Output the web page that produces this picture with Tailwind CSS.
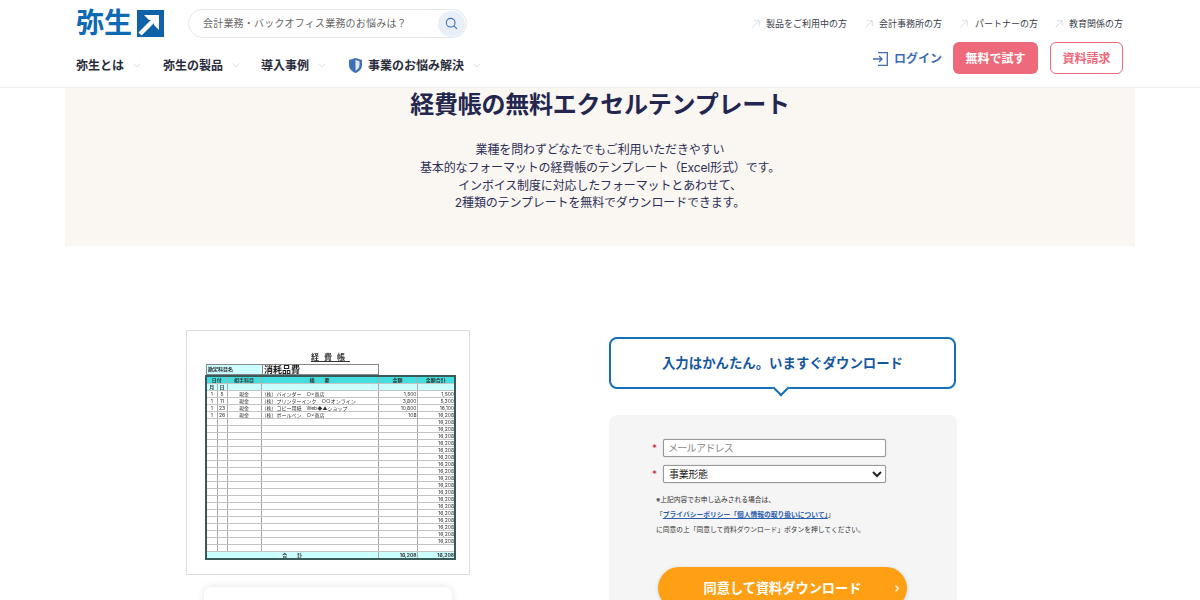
<!DOCTYPE html>
<html lang="ja">
  <head>
    <meta charset="UTF-8" />
    <title>経費帳の無料エクセルテンプレート</title>
    <script src="https://cdn.jsdelivr.net/npm/@tailwindcss/browser@4"></script>
  </head>
  <body class="h-[600px] overflow-hidden bg-white font-['Inter','Noto_Sans_CJK_JP',sans-serif] text-[#23264f]">
    <!-- header -->
    <header class="flex h-[88px] justify-between border-b border-[#ececec] pl-[76px] pr-[77px]">
      <div class="flex flex-col">
        <div class="flex items-center pt-[9px]">
          <a class="flex h-[29px] w-[88px] items-center justify-between">
            <span class="text-[28px] leading-[29px] font-bold text-[#0f6ab4]">弥生</span>
            <svg class="h-[27px] w-[27px]" viewBox="0 0 27 27">
              <rect width="27" height="27" fill="#0f62a8" />
              <path d="M3 24 L18 9" stroke="#fff" stroke-width="4.500" />
              <path d="M7 5 H22 V20 L17 15 V10 H12 Z" fill="#fff" />
            </svg>
          </a>
          <div class="ml-[24px] flex h-[29px] w-[279px] items-center justify-between rounded-full border border-[#e4e6ea] pl-[14px] pr-[1px]">
            <span class="text-[10px] tracking-[0.2px] text-[#666]">会計業務・バックオフィス業務のお悩みは？</span>
            <span class="flex h-[26px] w-[27px] items-center justify-center rounded-full bg-[#e9eff9]">
              <svg class="h-[13px] w-[13px]" viewBox="0 0 24 24" fill="none" stroke="#3f70b5" stroke-width="2">
                <circle cx="10.5" cy="10.5" r="8" />
                <path d="M16.5 16.5 L22 22" />
              </svg>
            </span>
          </div>
        </div>
        <nav class="mt-[18px] flex items-center text-[12px] leading-[19px] font-bold text-[#2a2c3c]">
          <span>弥生とは</span>
          <svg class="ml-[9px] h-[5px] w-[8px]" viewBox="0 0 8 5" fill="none" stroke="#dfe1e5"><path d="M.5.5 4 4 7.500.5" /></svg>
          <span class="ml-[22px]">弥生の製品</span>
          <svg class="ml-[9px] h-[5px] w-[8px]" viewBox="0 0 8 5" fill="none" stroke="#dfe1e5"><path d="M.5.5 4 4 7.500.5" /></svg>
          <span class="ml-[21px]">導入事例</span>
          <svg class="ml-[9px] h-[5px] w-[8px]" viewBox="0 0 8 5" fill="none" stroke="#dfe1e5"><path d="M.5.5 4 4 7.500.5" /></svg>
          <svg class="ml-[23px] h-[15px] w-[13px]" viewBox="0 0 13 15">
            <path d="M6.500 0 L13 2 V7 C13 11 10 13.500 6.500 15 C3 13.500 0 11 0 7 V2 Z" fill="#3f6fb5" />
            <path d="M6.500 2 L10.500 3.200 V7 C10.500 9.800 8.700 11.500 6.500 12.700 Z" fill="#dfe8f5" />
          </svg>
          <span class="ml-[6px]">事業のお悩み解決</span>
          <svg class="ml-[9px] h-[5px] w-[8px]" viewBox="0 0 8 5" fill="none" stroke="#dfe1e5"><path d="M.5.5 4 4 7.500.5" /></svg>
        </nav>
      </div>

      <div class="flex flex-col items-end">
        <ul class="mt-[17px] flex text-[9px] leading-[14px] text-[#3a3c4a]">
          <li class="flex items-center">
            <svg class="mr-[6px] h-[8px] w-[8px]" viewBox="0 0 8 8" fill="none" stroke="#dcdee2"><path d="M.5 7.500 7 1M2 .7H7.300V6" /></svg>製品をご利用中の方
          </li>
          <li class="ml-[18px] flex items-center">
            <svg class="mr-[6px] h-[8px] w-[8px]" viewBox="0 0 8 8" fill="none" stroke="#dcdee2"><path d="M.5 7.500 7 1M2 .7H7.300V6" /></svg>会計事務所の方
          </li>
          <li class="ml-[18px] flex items-center">
            <svg class="mr-[7px] h-[8px] w-[8px]" viewBox="0 0 8 8" fill="none" stroke="#dcdee2"><path d="M.5 7.500 7 1M2 .7H7.300V6" /></svg>パートナーの方
          </li>
          <li class="ml-[17px] flex items-center">
            <svg class="mr-[6px] h-[8px] w-[8px]" viewBox="0 0 8 8" fill="none" stroke="#dcdee2"><path d="M.5 7.500 7 1M2 .7H7.300V6" /></svg>教育関係の方
          </li>
        </ul>
        <div class="mt-[11px] flex items-center">
          <a class="flex items-center pt-[1px] text-[12px] font-bold text-[#3d6db3]">
            <svg class="mr-[6px] h-[14px] w-[15px]" viewBox="0 0 15 14" fill="none" stroke="#3d6db3" stroke-width="1.300">
              <path d="M0 7H9M6 4l3 3-3 3" />
              <path d="M5 .7H14.300V13.300H5" />
            </svg>ログイン
          </a>
          <a class="ml-[11px] flex h-[32px] w-[85px] items-center justify-center rounded-md bg-[#ee6a7b] pt-[1px] text-[12px] font-bold text-white">無料で試す</a>
          <a class="ml-[12px] flex h-[32px] w-[73px] items-center justify-center rounded-md border border-[#ee6a7b] pt-[1px] text-[12px] font-bold text-[#ee6a7b]">資料請求</a>
        </div>
      </div>
    </header>

    <!-- intro -->
    <section class="mx-[65px] h-[158px] bg-[#faf6f2] text-center">
      <h1 class="pt-[1px] text-[24px] leading-[32px] font-bold tracking-[-0.25px] text-[#23264f]">経費帳の無料エクセルテンプレート</h1>
      <p class="mt-[20px] text-[12px] leading-[17.75px] tracking-[-0.14px] text-[#2c2f55]">
        業種を問わずどなたでもご利用いただきやすい<br />
        基本的なフォーマットの経費帳のテンプレート（Excel形式）です。<br />
        インボイス制度に対応したフォーマットとあわせて、<br />
        2種類のテンプレートを無料でダウンロードできます。
      </p>
    </section>

    <main class="flex items-start pl-[186px]">
      <!-- template preview -->
      <div class="mt-[84px] w-[284px]">
        <div class="h-[245px] w-[284px] border border-[#dcdcdc] bg-white pl-[18px] pt-[21px]">
          <div class="blur-[0.35px]">
            <p class="w-[251px] text-center text-[8px] leading-[10px] font-bold tracking-[5px] text-[#333] underline">経費帳</p>
            <div class="mt-[2px] ml-[1px] flex h-[11px] w-[173px] border border-[#888] text-[#222]">
              <span class="w-[55px] bg-[#ccffff] pl-[1px] text-[5px] leading-[9px] font-bold">勘定科目名</span>
              <span class="flex-1 border-l border-[#888] bg-white pl-[1px] text-[9px] leading-[9px] font-bold">消耗品費</span>
            </div>
            <table class="h-[185px] w-[249px] table-fixed border-collapse border-2 border-[#3a5a5a] text-[5px] leading-[6px] text-[#333] [&_td]:h-[7px] [&_td]:overflow-hidden [&_td]:border-x [&_td]:border-b [&_td]:border-x-[#aaa] [&_td]:border-b-[#c4c4c4] [&_td]:p-0 [&_td]:whitespace-nowrap">
              <colgroup>
                <col class="w-[11px]" /><col class="w-[10px]" /><col class="w-[34px]" /><col class="w-[117px]" /><col class="w-[39px]" /><col class="w-[38px]" />
              </colgroup>
              <tr class="bg-[#44dddd] text-center font-bold">
                <td colspan="2">日付</td><td>相手科目</td><td>摘　　要</td><td>金額</td><td>金額合計</td>
              </tr>
              <tr class="bg-[#ccffff] text-center font-bold">
                <td>月</td><td>日</td><td></td><td></td><td></td><td></td>
              </tr>
              <tr class="[&_td:last-child]:text-right [&_td:nth-child(5)]:text-right">
                <td class="text-center">1</td><td class="text-center">5</td><td class="text-center">現金</td><td>（株）バインダー　○×商店</td><td>1,500</td><td>1,500</td>
              </tr>
              <tr class="[&_td:last-child]:text-right [&_td:nth-child(5)]:text-right">
                <td class="text-center">1</td><td class="text-center">11</td><td class="text-center">現金</td><td>（株）プリンターインク　○○オンライン</td><td>3,800</td><td>5,300</td>
              </tr>
              <tr class="[&_td:last-child]:text-right [&_td:nth-child(5)]:text-right">
                <td class="text-center">1</td><td class="text-center">23</td><td class="text-center">現金</td><td>（株）コピー用紙　Web◆▲ショップ</td><td>10,800</td><td>16,100</td>
              </tr>
              <tr class="[&_td:last-child]:text-right [&_td:nth-child(5)]:text-right">
                <td class="text-center">1</td><td class="text-center">26</td><td class="text-center">現金</td><td>（株）ボールペン　○×商店</td><td>108</td><td>16,208</td>
              </tr>
              <tr class="text-right"><td></td><td></td><td></td><td></td><td></td><td>16,208</td></tr>
              <tr class="text-right"><td></td><td></td><td></td><td></td><td></td><td>16,208</td></tr>
              <tr class="text-right"><td></td><td></td><td></td><td></td><td></td><td>16,208</td></tr>
              <tr class="text-right"><td></td><td></td><td></td><td></td><td></td><td>16,208</td></tr>
              <tr class="text-right"><td></td><td></td><td></td><td></td><td></td><td>16,208</td></tr>
              <tr class="text-right"><td></td><td></td><td></td><td></td><td></td><td>16,208</td></tr>
              <tr class="text-right"><td></td><td></td><td></td><td></td><td></td><td>16,208</td></tr>
              <tr class="text-right"><td></td><td></td><td></td><td></td><td></td><td>16,208</td></tr>
              <tr class="text-right"><td></td><td></td><td></td><td></td><td></td><td>16,208</td></tr>
              <tr class="text-right"><td></td><td></td><td></td><td></td><td></td><td>16,208</td></tr>
              <tr class="text-right"><td></td><td></td><td></td><td></td><td></td><td>16,208</td></tr>
              <tr class="text-right"><td></td><td></td><td></td><td></td><td></td><td>16,208</td></tr>
              <tr class="text-right"><td></td><td></td><td></td><td></td><td></td><td>16,208</td></tr>
              <tr class="text-right"><td></td><td></td><td></td><td></td><td></td><td>16,208</td></tr>
              <tr class="text-right"><td></td><td></td><td></td><td></td><td></td><td>16,208</td></tr>
              <tr class="text-right"><td></td><td></td><td></td><td></td><td></td><td>16,208</td></tr>
              <tr class="text-right"><td></td><td></td><td></td><td></td><td></td><td>16,208</td></tr>
              <tr class="text-right"><td></td><td></td><td></td><td></td><td></td><td>16,208</td></tr>
              <tr><td></td><td></td><td></td><td></td><td></td><td></td></tr>
              <tr class="bg-[#ccffff] font-bold">
                <td colspan="4" class="text-center">合　　計</td><td class="text-right">16,208</td><td class="text-right">16,208</td>
              </tr>
            </table>
          </div>
        </div>
        <div class="mx-auto mt-[12px] h-[60px] w-[248px] rounded-lg bg-white shadow-[0_0_8px_rgba(0,0,0,0.12)]"></div>
      </div>

      <!-- download form -->
      <div class="ml-[139px] mt-[91px] w-[348px]">
        <div class="relative flex h-[52px] w-[347px] items-center justify-center rounded-lg border-2 border-[#1670b8] bg-white pt-[1px] text-[13.4px] font-bold text-[#15589f]">
          入力はかんたん。いますぐダウンロード
          <span class="absolute bottom-[-7px] left-[164px] h-[12px] w-[12px] rotate-45 border-b-2 border-r-2 border-[#1670b8] bg-white"></span>
        </div>
        <form class="mt-[26px] h-[250px] rounded-lg bg-[#f5f5f5] pl-[43px] pt-[24px]">
          <div class="flex items-center">
            <span class="w-[11px] text-[10px] text-[#c0272d]">*</span>
            <input type="text" placeholder="メールアドレス" class="h-[18px] w-[223px] rounded-[2px] border border-[#999] bg-white px-[4px] text-[10px] tracking-[-0.7px] shadow-[0_0_1px_rgba(0,0,0,0.4)] placeholder:text-[#888]" />
          </div>
          <div class="mt-[8px] flex items-center">
            <span class="w-[11px] text-[10px] text-[#c0272d]">*</span>
            <select class="h-[18px] w-[223px] rounded-[2px] border border-[#999] bg-white px-[1px] text-[10px] tracking-[-0.3px] text-[#222] shadow-[0_0_1px_rgba(0,0,0,0.4)]">
              <option>事業形態</option>
            </select>
          </div>
          <div class="mt-[9px] pl-[4px] text-[6.75px] leading-[15px] text-[#333]">
            <p>※上記内容でお申し込みされる場合は、</p>
            <p>「<a class="font-bold text-[#2a5db0] underline">プライバシーポリシー「個人情報の取り扱いについて」</a>」</p>
            <p>に同意の上「同意して資料ダウンロード」ボタンを押してください。</p>
          </div>
          <button type="button" class="relative mt-[30px] ml-[6px] flex h-[42px] w-[249px] items-center justify-center rounded-full bg-[#ff9f14] pt-[1px] text-[13.2px] font-bold text-white shadow-[0_1px_4px_rgba(0,0,0,0.15)]">
            同意して資料ダウンロード
            <svg class="absolute right-[8px] top-[18px] h-[7px] w-[4px]" viewBox="0 0 4 7" fill="none" stroke="#fff" stroke-width="1.200"><path d="M.5.5 3.500 3.500.5 6.500" /></svg>
          </button>
        </form>
      </div>
    </main>
  </body>
</html>
